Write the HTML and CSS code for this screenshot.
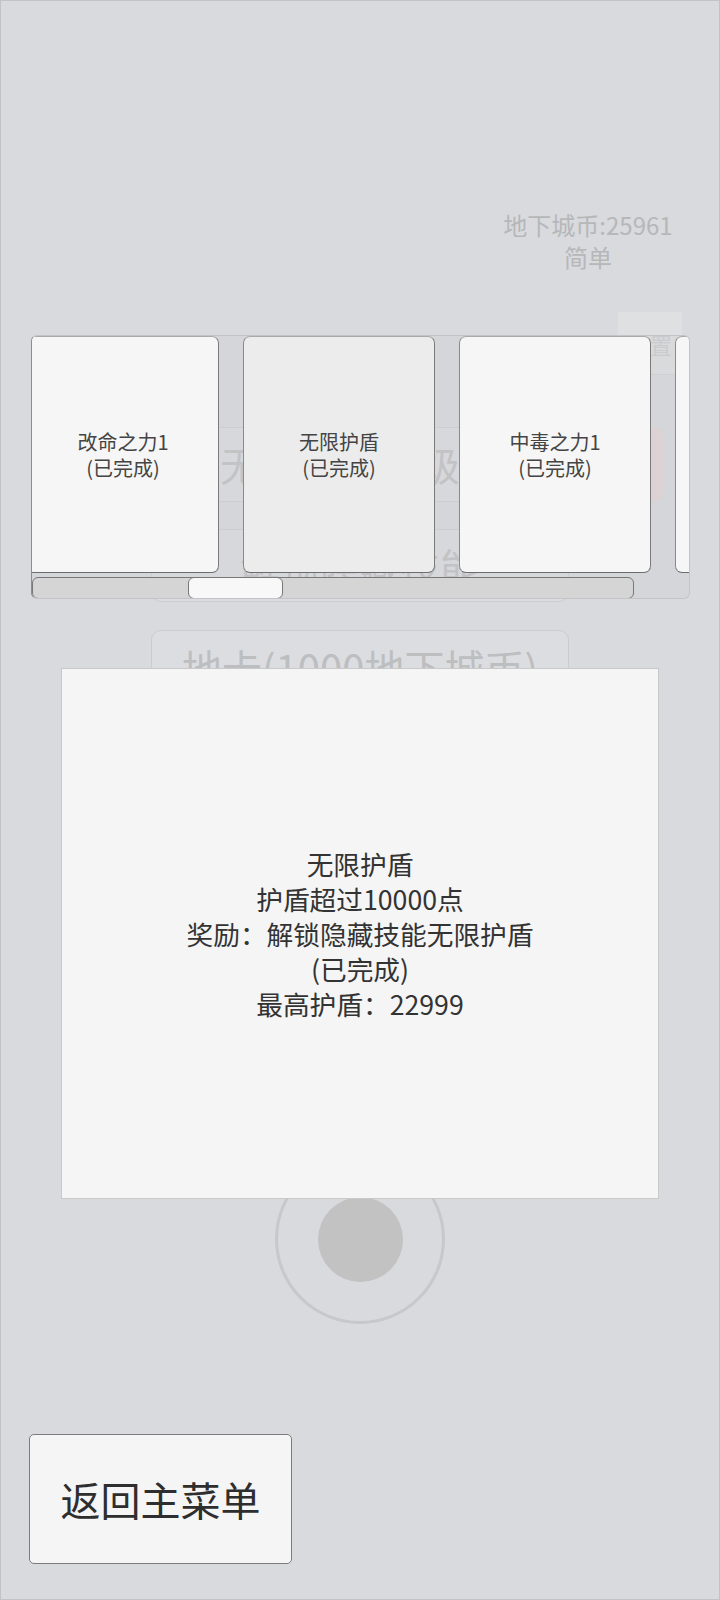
FILE: index.html
```html
<!DOCTYPE html>
<html lang="zh-CN">
<head>
<meta charset="utf-8">
<title>成就</title>
<link rel="stylesheet" href="styles.css">
</head>
<body>
<div class="screen">
  <div class="hud">
    <div class="coins">
      <div>地下城币:25961</div>
      <div>简单</div>
    </div>
    <div class="settings"><span>设置</span></div>
    <div class="menu-row">
      <div class="menu-btn">无尽挑战升级版</div>
      <div class="menu-red"></div>
    </div>
    <div class="menu-btn menu-b">解锁隐藏技能</div>
    <div class="menu-btn menu-c">地卡(1000地下城币)</div>
    <div class="joystick"><div class="knob"></div></div>
    <button class="back-btn">返回主菜单</button>
  </div>

  <div class="ach">
    <div class="ach-track">
      <div class="card">改命之力1<br>(已完成)</div>
      <div class="card card-sel">无限护盾<br>(已完成)</div>
      <div class="card">中毒之力1<br>(已完成)</div>
      <div class="card"></div>
    </div>
    <div class="scrollbar"><div class="thumb"></div></div>
  </div>

  <div class="modal">
    <div class="modal-text">
      <div>无限护盾</div>
      <div>护盾超过10000点</div>
      <div>奖励：解锁隐藏技能无限护盾</div>
      <div>(已完成)</div>
      <div>最高护盾：22999</div>
    </div>
  </div>
</div>
</body>
</html>
```

FILE: styles.css
```css
* { box-sizing: border-box; }
html, body {
  margin: 0;
  padding: 0;
  background: #d9dadd;
}
body {
  font-family: "Noto Sans CJK SC", "Noto Sans", sans-serif;
}
.screen {
  position: relative;
  width: 720px;
  height: 1600px;
  border: 1px solid #c2c3c6;
  background: #d9dadd;
  overflow: hidden;
}
.hud {
  display: flex;
  flex-direction: column;
  height: 100%;
}
.coins {
  align-self: flex-end;
  width: 200px;
  margin-top: 208px;
  margin-right: 31px;
  text-align: center;
  color: #b6b7b9;
  font-size: 24px;
  line-height: 32px;
}
.settings {
  align-self: flex-end;
  width: 64px;
  height: 63px;
  margin-top: 39px;
  margin-right: 37px;
  background: #dfe0e2;
  border-bottom: 1px solid #d0d1d3;
  color: #c9cacc;
  font-size: 22px;
  text-align: center;
  padding-top: 16px;
}
.menu-row {
  display: flex;
  align-items: flex-start;
  margin-top: 52px;
  padding-left: 150px;
  gap: 20px;
}
.menu-btn {
  width: 418px;
  height: 75px;
  border: 1px solid #cbccce;
  border-radius: 10px;
  background: #dcdde0;
  color: #bdbec0;
  font-size: 40px;
  line-height: 72px;
  text-align: center;
  white-space: nowrap;
  overflow: hidden;
}
.menu-red {
  width: 74px;
  height: 75px;
  border-radius: 10px;
  background: #e3d3d4;
}
.menu-b {
  align-self: center;
  height: 73px;
  margin-top: 27px;
}
.menu-c {
  align-self: center;
  height: 73px;
  margin-top: 28px;
}
.joystick {
  align-self: center;
  width: 170px;
  height: 170px;
  margin-top: 451px;
  border: 3px solid #c7c8ca;
  border-radius: 50%;
  display: flex;
  align-items: center;
  justify-content: center;
}
.knob {
  width: 85px;
  height: 85px;
  border-radius: 50%;
  background: #c2c2c3;
}
.back-btn {
  align-self: flex-start;
  width: 263px;
  height: 130px;
  margin-top: 110px;
  margin-left: 28px;
  border: 1px solid #7c7c7c;
  border-radius: 5px;
  background: #f5f5f6;
  color: #2e2e2e;
  font-family: "Noto Sans CJK SC", sans-serif;
  font-size: 40px;
  padding: 0;
}

/* achievements scroller overlay */
.ach {
  position: absolute;
  left: 30px;
  top: 334px;
  width: 659px;
  height: 264px;
  border: 1px solid #c3c4c6;
  border-left-color: #8d8d8d;
  border-radius: 6px;
  background: rgba(205, 206, 209, 0.35);
  overflow: hidden;
}
.ach-track {
  display: flex;
  gap: 24px;
  height: 237px;
  margin-left: -5px;
}
.card {
  flex: 0 0 192px;
  height: 237px;
  border: 1px solid #858585;
  border-color: #a9a9a9 #7a7a7a #6c6c6c #8a8a8a;
  border-radius: 7px;
  background: #f6f6f6;
  color: #444;
  font-size: 20px;
  line-height: 26px;
  display: flex;
  align-items: center;
  justify-content: center;
  text-align: center;
}
.card-sel {
  background: #ececec;
}
.scrollbar {
  position: relative;
  width: 602px;
  height: 22px;
  margin-top: 4px;
  border: 1px solid #777;
  border-radius: 6px;
  background: #d5d5d6;
}
.thumb {
  position: absolute;
  left: 155px;
  top: -1px;
  width: 95px;
  height: 22px;
  border: 1px solid #777;
  border-radius: 6px;
  background: #f8f8f8;
}

/* detail modal */
.modal {
  position: absolute;
  left: 60px;
  top: 667px;
  width: 598px;
  height: 531px;
  border: 1px solid #c9c9c9;
  background: #f5f5f5;
  display: flex;
  align-items: center;
  justify-content: center;
}
.modal-text {
  text-align: center;
  color: #333;
  font-size: 26.7px;
  line-height: 35px;
}
```
